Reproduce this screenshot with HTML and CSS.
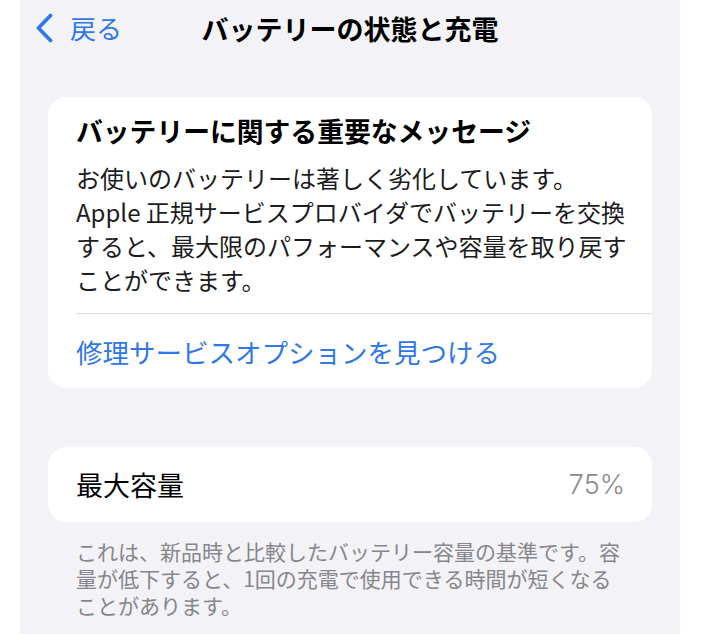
FILE: index.html
```html
<!DOCTYPE html>
<html lang="ja">
<head>
<meta charset="utf-8">
<title>バッテリーの状態と充電</title>
<link rel="stylesheet" href="styles.css">
</head>
<body>
<div class="screen">
  <header class="nav">
    <a class="nav-back" href="#">
      <svg class="chevron" width="18" height="30" viewBox="0 0 18 30" aria-hidden="true">
        <path d="M15.5 2.5 L3.5 15 L15.5 27.5" fill="none" stroke="currentColor" stroke-width="3.8" stroke-linecap="round" stroke-linejoin="round"/>
      </svg>
      <span>戻る</span>
    </a>
    <h1 class="nav-title">バッテリーの状態と充電</h1>
    <span class="nav-spacer"></span>
  </header>

  <section class="card">
    <div class="msg">
      <h2 class="msg-title">バッテリーに関する重要なメッセージ</h2>
      <p class="msg-body">お使いのバッテリーは著しく劣化しています。Apple 正規サービスプロバイダでバッテリーを交換すると、最大限のパフォーマンスや容量を取り戻すことができます。</p>
    </div>
    <a class="card-link" href="#">修理サービスオプションを見つける</a>
  </section>

  <section class="card card-row">
    <span class="row-label">最大容量</span>
    <span class="row-value">75%</span>
  </section>
  <p class="footnote">これは、新品時と比較したバッテリー容量の基準です。容量が低下すると、1回の充電で使用できる時間が短くなることがあります。</p>
</div>
</body>
</html>
```

FILE: styles.css
```css
html, body {
  margin: 0;
  padding: 0;
  background: #ffffff;
}

body {
  font-family: "Noto Sans CJK JP", "Noto Sans", sans-serif;
  color: #000;
}

.screen {
  margin-left: 20px;
  width: 660px;
  min-height: 634px;
  background: #f2f2f7;
  display: flex;
  flex-direction: column;
}

/* navigation bar */
.nav {
  height: 56px;
  display: grid;
  grid-template-columns: 1fr auto 1fr;
  align-items: center;
  padding-left: 15px;
  padding-right: 15px;
}

.nav-back {
  display: flex;
  align-items: center;
  gap: 17px;
  color: #2f78e6;
  text-decoration: none;
  font-size: 26px;
  line-height: 1;
}

.chevron {
  display: block;
}

.nav-title {
  margin: 0;
  font-size: 27px;
  font-weight: 700;
  line-height: 1;
  color: #000;
  text-align: center;
}

/* grouped cards */
.card {
  margin: 41px 28px 0 28px;
  background: #ffffff;
  border-radius: 18px;
}

.msg {
  padding: 17px 20px 16px 28px;
}

.msg-title {
  margin: 0;
  font-size: 26.8px;
  font-weight: 700;
  line-height: 34px;
  color: #000;
}

.msg-body {
  margin: 13px 0 0 0;
  font-size: 24px;
  line-height: 34px;
  color: #1c1c1e;
}

.card-link {
  margin-left: 28px;
  height: 74px;
  display: flex;
  align-items: center;
  border-top: 1px solid #dedee2;
  font-size: 26.5px;
  color: #2f78e6;
  text-decoration: none;
}

.card-row {
  margin-top: 59px;
  height: 75px;
  padding: 0 27px 0 28px;
  display: flex;
  align-items: center;
  justify-content: space-between;
  font-size: 27px;
}

.row-label {
  color: #000;
}

.row-value {
  font-family: "Inter", "Noto Sans CJK JP", sans-serif;
  font-weight: 300;
  color: #8a8a8e;
}

.footnote {
  margin: 16px 0 0 56px;
  width: 550px;
  font-size: 21px;
  line-height: 27px;
  color: #86868b;
}
```
